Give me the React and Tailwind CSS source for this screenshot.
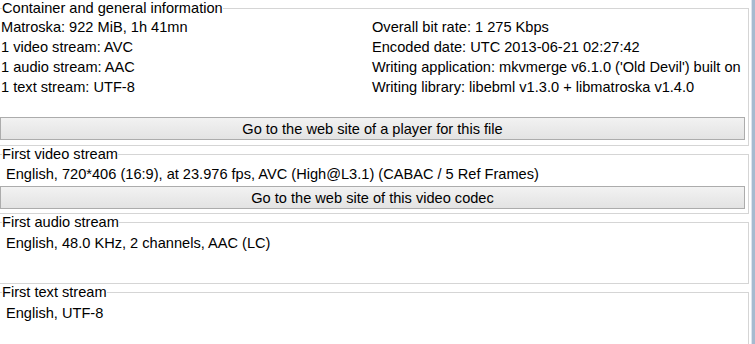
import React from 'react';

const font = { fontFamily: '"Liberation Sans", Arial, sans-serif' };

const GroupBox = ({ title, className = '', children }) => (
  <fieldset className={`border-t border-r border-b border-l-0 border-[#d5d5d5] w-[749px] ${className}`}>
    <legend className="ml-[2px] px-0 leading-[16px] text-black">{title}</legend>
    {children}
  </fieldset>
);

const WinButton = ({ children, className = '' }) => (
  <div
    className={`h-[23px] w-[745px] border border-[#acacac] bg-gradient-to-b from-[#f2f2f2] to-[#e3e3e3] flex items-center justify-center leading-[16px] ${className}`}
  >
    {children}
  </div>
);

export default function App() {
  const left = [
    'Matroska: 922 MiB, 1h 41mn',
    '1 video stream: AVC',
    '1 audio stream: AAC',
    '1 text stream: UTF-8',
  ];
  const right = [
    'Overall bit rate: 1 275 Kbps',
    'Encoded date: UTC 2013-06-21 02:27:42',
    "Writing application: mkvmerge v6.1.0 ('Old Devil') built on",
    'Writing library: libebml v1.3.0 + libmatroska v1.4.0',
  ];

  return (
    <div className="w-[755px] h-[344px] bg-white flex overflow-hidden text-[14.6px] text-black" style={font}>
      <div className="w-[751px] flex flex-col">
        {/* Container */}
        <GroupBox title="Container and general information" className="pb-[5px]">
          <div className="grid grid-cols-[371px_1fr] pl-[1px] pt-[1px] leading-[20px] whitespace-nowrap">
            <div className="flex flex-col">
              {left.map((t) => (
                <div key={t}>{t}</div>
              ))}
            </div>
            <div className="flex flex-col">
              {right.map((t) => (
                <div key={t}>{t}</div>
              ))}
            </div>
          </div>
          <WinButton className="mt-[20px]">Go to the web site of a player for this file</WinButton>
        </GroupBox>

        {/* Video */}
        <GroupBox title="First video stream" className="pb-[4px]">
          <div className="pt-[2px] pl-[6px] leading-[20px] whitespace-nowrap">
            English, 720*406 (16:9), at 23.976 fps, AVC (High@L3.1) (CABAC / 5 Ref Frames)
          </div>
          <WinButton className="mt-[2px]">Go to the web site of this video codec</WinButton>
        </GroupBox>

        {/* Audio */}
        <GroupBox title="First audio stream" className="pb-[30px]">
          <div className="pt-[3px] pl-[6px] leading-[20px] whitespace-nowrap">
            English, 48.0 KHz, 2 channels, AAC (LC)
          </div>
        </GroupBox>

        {/* Text */}
        <GroupBox title="First text stream" className="pb-[30px]">
          <div className="pt-[3px] pl-[6px] leading-[20px] whitespace-nowrap">English, UTF-8</div>
        </GroupBox>
      </div>
      <div className="w-[1px] bg-[#dbe4ee]" />
      <div className="w-[3px] bg-[#a6bacf]" />
    </div>
  );
}
